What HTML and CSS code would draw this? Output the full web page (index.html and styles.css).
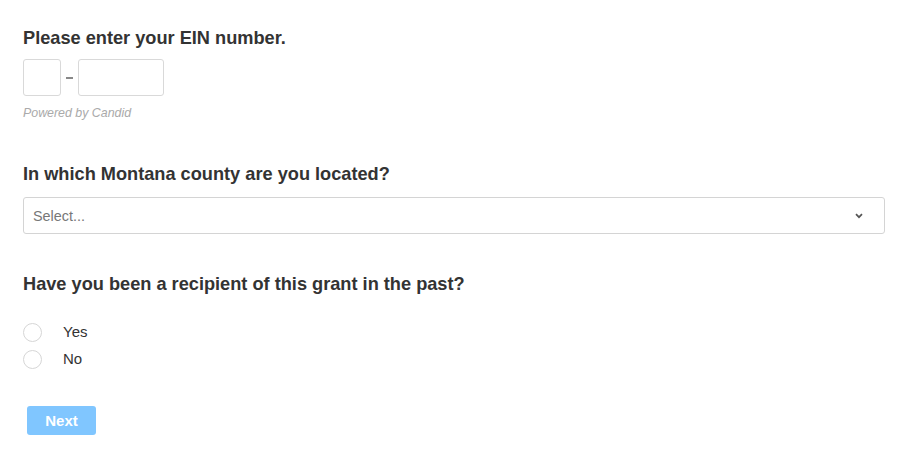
FILE: index.html
```html
<!DOCTYPE html>
<html>
<head>
<meta charset="utf-8">
<link rel="stylesheet" href="styles.css">
</head>
<body>
<form class="page">
  <section class="field">
    <h2 class="q">Please enter your EIN number.</h2>
    <div class="ein">
      <span class="box box-short"></span>
      <span class="dash"></span>
      <span class="box box-long"></span>
    </div>
    <p class="powered">Powered by Candid</p>
  </section>

  <section class="field field-county">
    <h2 class="q">In which Montana county are you located?</h2>
    <div class="select">
      <span class="placeholder">Select...</span>
      <svg class="chev" width="8" height="6" viewBox="0 0 8 6"><path d="M1 1.2 L4 4.2 L7 1.2" fill="none" stroke="#555" stroke-width="1.7"/></svg>
    </div>
  </section>

  <section class="field field-past">
    <h2 class="q">Have you been a recipient of this grant in the past?</h2>
    <div class="radios">
      <label class="radio"><span class="circle"></span><span class="rlabel">Yes</span></label>
      <label class="radio"><span class="circle"></span><span class="rlabel">No</span></label>
    </div>
  </section>

  <div class="actions">
    <span class="btn">Next</span>
  </div>
</form>
</body>
</html>
```

FILE: styles.css
```css
html, body {
  margin: 0;
  padding: 0;
  background: #fff;
}
body {
  font-family: "Liberation Sans", Arial, sans-serif;
  color: #333;
}
.page {
  padding: 27px 15px 0 23px;
  display: flex;
  flex-direction: column;
}
.q {
  margin: 0;
  font-size: 18.2px;
  line-height: 22px;
  font-weight: bold;
  color: #333;
}
.ein {
  display: flex;
  align-items: center;
  margin-top: 10px;
}
.box {
  display: block;
  height: 35px;
  border: 1px solid #d9d9d9;
  border-radius: 3px;
  box-sizing: content-box;
}
.box-short { width: 36px; }
.box-long { width: 84px; }
.dash {
  display: block;
  width: 7px;
  height: 1.5px;
  margin: 1px 5px 0 5px;
  background: #888;
}
.powered {
  margin: 10px 0 0;
  font-size: 12.4px;
  line-height: 15px;
  font-style: italic;
  color: #aaa;
}
.field-county { margin-top: 42px; }
.select {
  margin-top: 12px;
  height: 35px;
  border: 1px solid #d4d4d4;
  border-radius: 3px;
  display: flex;
  align-items: center;
  justify-content: space-between;
  padding: 0 21px 0 9px;
}
.placeholder {
  font-size: 14.4px;
  color: #777;
}
.chev { display: block; margin-top: 1px; }
.field-past { margin-top: 39px; }
.radios {
  margin-top: 28px;
  display: flex;
  flex-direction: column;
  gap: 9px;
}
.radio {
  display: flex;
  align-items: center;
  gap: 21px;
  height: 18px;
}
.circle {
  width: 17px;
  height: 17px;
  border: 1px solid #d6d6d6;
  border-radius: 50%;
  background: #fff;
}
.rlabel {
  font-size: 15px;
  color: #333;
  margin-top: -1px;
}
.actions {
  margin-top: 38px;
  padding-left: 4px;
  display: flex;
}
.btn {
  display: inline-flex;
  align-items: center;
  justify-content: center;
  width: 69px;
  height: 29px;
  border-radius: 3px;
  background: #80c6ff;
  color: #fff;
  font-weight: bold;
  font-size: 15px;
}
```
